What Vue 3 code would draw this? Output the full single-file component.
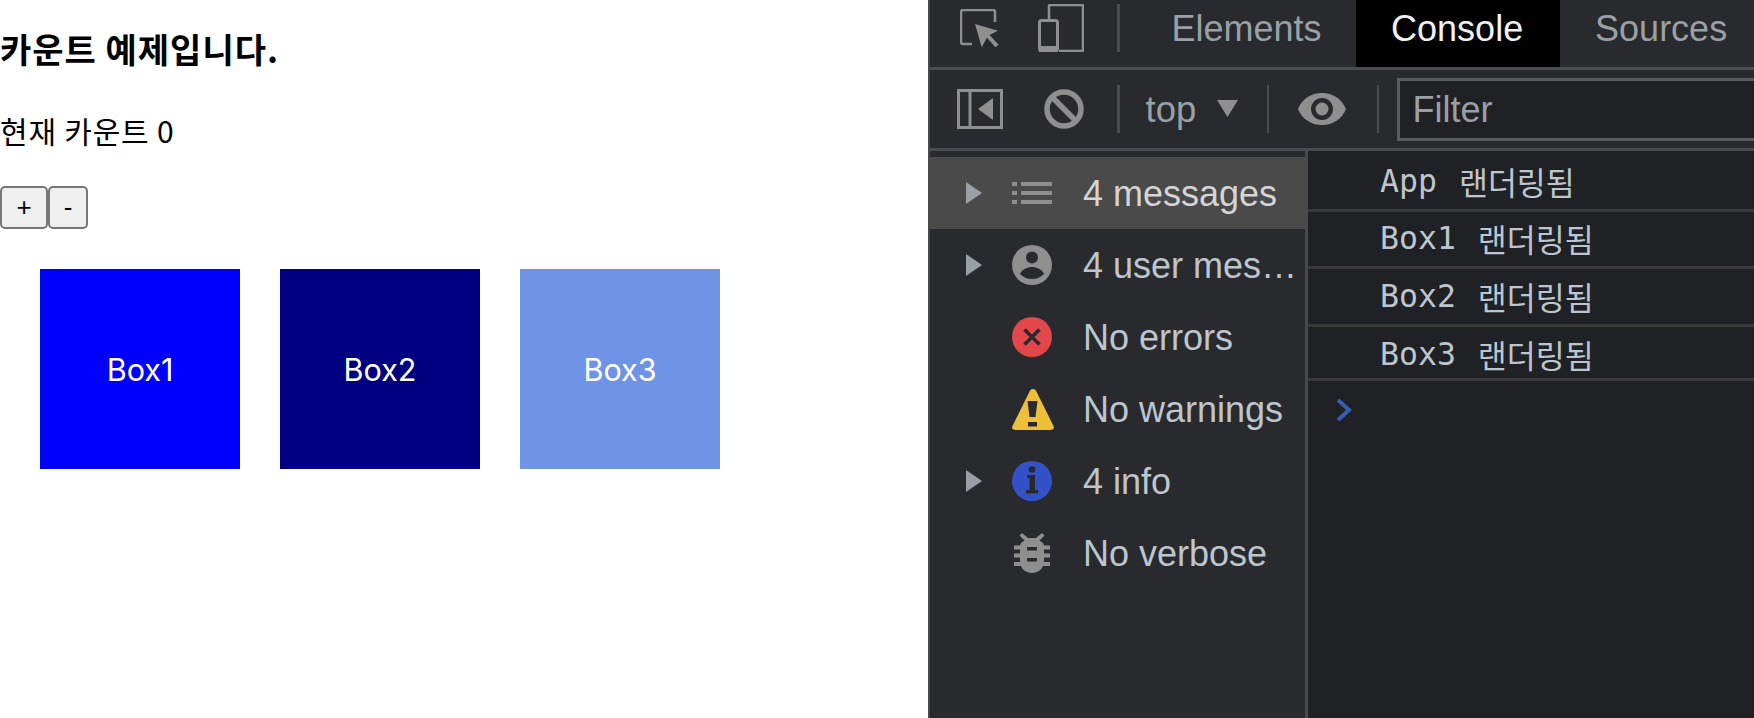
<script setup>
const tabs = [
  { label: 'Elements', cls: 'tab-elements' },
  { label: 'Console', cls: 'tab-console' },
  { label: 'Sources', cls: 'tab-sources' },
]
const boxes = [
  { label: 'Box1', color: '#0000ff' },
  { label: 'Box2', color: '#000080' },
  { label: 'Box3', color: '#6f94e6' },
]
const logs = ['App', 'Box1', 'Box2', 'Box3']
</script>

<template>
  <div class="page">
    <main class="demo">
      <h3 class="title">카운트 예제입니다.</h3>
      <p class="count">현재 카운트 0</p>
      <div class="buttons">
        <button class="btn plus">+</button>
        <button class="btn minus">-</button>
      </div>
      <div class="boxes">
        <div v-for="b in boxes" :key="b.label" class="box" :style="{ background: b.color }">{{ b.label }}</div>
      </div>
    </main>

    <section class="devtools">
      <header class="tabbar">
        <svg class="ic-inspect" width="40" height="40" viewBox="0 0 40 40" fill="none">
          <path d="M12 35H3a2 2 0 0 1-2-2V3a2 2 0 0 1 2-2h30a2 2 0 0 1 2 2v10" stroke="#8f8f8f" stroke-width="2.5"/>
          <path d="M15 15l23 6.700-10 5-6.300 11.600z" fill="#8f8f8f"/>
          <path d="M27 26l10 11" stroke="#8f8f8f" stroke-width="4"/>
        </svg>
        <svg class="ic-device" width="46" height="48" viewBox="0 0 46 48" fill="none">
          <path d="M11 15V2a1 1 0 0 1 1-1h32a1 1 0 0 1 1 1v44a1 1 0 0 1-1 1H21" stroke="#8f8f8f" stroke-width="2.5"/>
          <rect x="1.500" y="16.500" width="18" height="30" rx="2" stroke="#8f8f8f" stroke-width="3"/>
          <rect x="1" y="42" width="19" height="6" fill="#8f8f8f"/>
        </svg>
        <span class="vsep first-sep"></span>
        <span v-for="t in tabs" :key="t.label" class="tab" :class="t.cls">{{ t.label }}</span>
      </header>

      <div class="toolbar">
        <svg class="ic-panel" width="46" height="40" viewBox="0 0 46 40" fill="none">
          <rect x="1.500" y="1.500" width="43" height="37" stroke="#8f8f8f" stroke-width="3"/>
          <path d="M13 1v38" stroke="#8f8f8f" stroke-width="3"/>
          <path d="M36 9v22L21 20z" fill="#8f8f8f"/>
        </svg>
        <svg class="ic-block" width="40" height="40" viewBox="0 0 40 40" fill="none">
          <circle cx="20" cy="20" r="17" stroke="#8f8f8f" stroke-width="5.500"/>
          <path d="M8 8l24 24" stroke="#8f8f8f" stroke-width="5.500"/>
        </svg>
        <span class="vsep sep-b"></span>
        <span class="top-label">top</span>
        <svg class="ic-caret" width="21" height="17" viewBox="0 0 21 17"><path d="M0 0h21L10.500 17z" fill="#8f8f8f"/></svg>
        <span class="vsep sep-c"></span>
        <svg class="ic-eye" width="48" height="32" viewBox="0 0 48 32">
          <path fill-rule="evenodd" fill="#8f8f8f" d="M24 0c11 0 20 6 24 16-4 10-13 16-24 16S4 26 0 16C4 6 13 0 24 0zm0 5a11 11 0 1 0 0 22 11 11 0 0 0 0-22z"/>
          <circle cx="24" cy="16" r="6.500" fill="#8f8f8f"/>
        </svg>
        <span class="vsep sep-d"></span>
        <div class="filter">Filter</div>
      </div>

      <div class="panes">
        <aside class="sidebar">
          <div class="row active">
            <span class="arrow"></span>
            <svg class="ric" width="40" height="40" viewBox="0 0 40 40" fill="#8f8f8f">
              <rect x="0" y="9" width="5" height="4"/><rect x="0" y="18" width="5" height="4"/><rect x="0" y="27" width="5" height="4"/>
              <rect x="9" y="9" width="31" height="4"/><rect x="9" y="18" width="31" height="4"/><rect x="9" y="27" width="31" height="4"/>
            </svg>
            <span class="rlabel light">4 messages</span>
          </div>
          <div class="row">
            <span class="arrow"></span>
            <svg class="ric" width="40" height="40" viewBox="0 0 40 40">
              <circle cx="20" cy="20" r="20" fill="#8f8f8f"/>
              <circle cx="20" cy="12.500" r="6" fill="#292a2d"/>
              <path d="M8 29c2-5 8-7 12-7s10 2 12 7c-3 3-7 5-12 5s-9-2-12-5z" fill="#292a2d"/>
            </svg>
            <span class="rlabel">4 user mes…</span>
          </div>
          <div class="row">
            <span class="arrow none"></span>
            <svg class="ric" width="40" height="40" viewBox="0 0 40 40">
              <circle cx="20" cy="20" r="20" fill="#e2474b"/>
              <path d="M12.500 12.500l15 15M27.500 12.500l-15 15" stroke="#292a2d" stroke-width="3.500"/>
            </svg>
            <span class="rlabel">No errors</span>
          </div>
          <div class="row">
            <span class="arrow none"></span>
            <svg class="ric" width="42" height="41" viewBox="0 0 42 41">
              <path d="M21 0c1.500 0 2.500.8 3.300 2.200L41.500 37c1 2.200-.2 4-3 4H3.500c-2.800 0-4-1.800-3-4L17.700 2.200C18.500.8 19.500 0 21 0z" fill="#f0bf3a"/>
              <path d="M15.500 12h10l-2 16h-6z" fill="#292a2d"/>
              <rect x="16" y="33" width="9" height="4.500" fill="#292a2d"/>
            </svg>
            <span class="rlabel">No warnings</span>
          </div>
          <div class="row">
            <span class="arrow"></span>
            <svg class="ric" width="40" height="40" viewBox="0 0 40 40">
              <circle cx="20" cy="20" r="20" fill="#3452c8"/>
              <circle cx="20" cy="8.500" r="3.300" fill="#292a2d"/>
              <path d="M15 14h8v15h3v3.500H14V29h3.500V17H15z" fill="#292a2d"/>
            </svg>
            <span class="rlabel">4 info</span>
          </div>
          <div class="row">
            <span class="arrow none"></span>
            <svg class="ric" width="40" height="40" viewBox="0 0 40 40" fill="#8f8f8f">
              <path d="M10 0l6 5h8l6-5 2.500 2.500-5 5C30.500 9 32 11 32 13v15c0 7-5 12-12 12S8 35 8 28V13c0-2 1.500-4 4.500-5.500l-5-5z"/>
              <rect x="2" y="12.500" width="36" height="4"/><rect x="2" y="20.500" width="36" height="4"/><rect x="2" y="29" width="36" height="4"/>
              <rect x="15" y="14" width="10" height="3.500" fill="#292a2d"/><rect x="15" y="25" width="10" height="3.500" fill="#292a2d"/>
            </svg>
            <span class="rlabel">No verbose</span>
          </div>
        </aside>
        <div class="console">
          <div v-for="l in logs" :key="l" class="log">
            <span class="mono">{{ l }}</span><span class="ko">랜더링됨</span>
          </div>
          <svg class="prompt" width="16" height="24" viewBox="0 0 16 24" fill="none">
            <path d="M2 2l11 10L2 22" stroke="#3b5cb0" stroke-width="4"/>
          </svg>
        </div>
      </div>
    </section>
  </div>
</template>

<style>
html, body { margin: 0; background: #fff; }
</style>

<style scoped>
.page {
  display: flex;
  width: 1754px;
  height: 718px;
  overflow: hidden;
  font-family: "Liberation Sans", "Noto Sans CJK KR", sans-serif;
}
.demo {
  width: 928px;
  flex: none;
  background: #fff;
  color: #000;
}
.title {
  margin: 0;
  padding-top: 30px;
  font-size: 34px;
  line-height: 37px;
  font-weight: 700;
  letter-spacing: 1px;
  font-family: "Noto Sans CJK KR", sans-serif;
  white-space: nowrap;
}
.count {
  margin: 0;
  padding-top: 45px;
  font-size: 30px;
  line-height: 37px;
  font-family: "Noto Sans CJK KR", sans-serif;
  font-weight: 400;
  letter-spacing: 0.8px;
}
.buttons {
  display: flex;
  padding-top: 37px;
}
.btn {
  height: 43px;
  padding: 0;
  box-sizing: border-box;
  background: #efefef;
  border: 2px solid #767676;
  border-radius: 5px;
  font-family: "Liberation Sans", sans-serif;
  font-size: 26px;
  color: #000;
}
.plus { width: 48px; }
.minus { width: 40px; }
.boxes {
  display: flex;
  gap: 40px;
  padding: 40px 0 0 40px;
}
.box {
  width: 200px;
  height: 200px;
  display: flex;
  align-items: center;
  justify-content: center;
  color: #fff;
  font-family: "Inter", "Liberation Sans", sans-serif;
  font-size: 30.500px;
  font-weight: 400;
}
.devtools {
  flex: 1;
  display: flex;
  flex-direction: column;
  background: #292a2d;
  border-left: 2px solid #48494c;
  min-width: 0;
}
.tabbar {
  height: 67px;
  flex: none;
  display: flex;
  align-items: stretch;
  border-bottom: 3px solid #494c50;
}
.ic-inspect { align-self: flex-start; margin-left: 30px; margin-top: 9px; flex: none; }
.ic-device { align-self: flex-start; margin-left: 38px; margin-top: 4px; flex: none; }
.vsep {
  width: 2.500px;
  background: #4a4c50;
  flex: none;
}
.first-sep { margin: 4px 0 15px 33px; }
.tab {
  font-size: 36px;
  color: #9aa0a6;
  display: flex;
  align-items: center;
  padding-bottom: 10px;
  box-sizing: border-box;
  white-space: nowrap;
}
.tab-elements { margin-left: 52px; }
.tab-console {
  margin-left: 34.500px;
  width: 204px;
  padding-left: 35px;
  background: #000;
  color: #f1f1f1;
  flex: none;
}
.tab-sources { margin-left: 35px; }
.toolbar {
  height: 78px;
  flex: none;
  display: flex;
  align-items: center;
  border-bottom: 3px solid #494c50;
}
.ic-panel { margin-left: 27px; flex: none; }
.ic-block { margin-left: 41px; flex: none; }
.vsep.sep-b, .vsep.sep-c, .vsep.sep-d { height: 48px; }
.sep-b { margin-left: 33px; }
.top-label { margin-left: 26px; width: 71px; font-size: 36.500px; color: #9aa0a6; margin-top: 1px; flex: none; }
.ic-caret { margin-top: -2px; flex: none; }
.sep-c { margin-left: 29px; }
.ic-eye { margin-left: 28.500px; flex: none; }
.sep-d { margin-left: 31px; }
.filter {
  margin-left: 17.500px;
  flex: 1;
  height: 63px;
  box-sizing: border-box;
  background: #202124;
  border: 3px solid #5a5b5d;
  border-right: 0;
  font-size: 36px;
  color: #9aa0a6;
  padding-left: 13px;
  display: flex;
  align-items: center;
  margin-top: 1px;
}
.panes {
  flex: 1;
  display: flex;
  min-height: 0;
}
.sidebar {
  width: 375px;
  flex: none;
  padding-top: 6px;
  border-right: 3px solid #48494c;
  background: #292a2d;
}
.row {
  height: 72px;
  display: flex;
  align-items: center;
  position: relative;
  padding-left: 36px;
}
.row.active { background: #4a4a4a; }
.arrow {
  width: 0;
  height: 0;
  border-left: 16px solid #9aa0a6;
  border-top: 11px solid transparent;
  border-bottom: 11px solid transparent;
  flex: none;
}
.arrow.none { border-left-color: transparent; }
.ric { margin-left: 30px; flex: none; }
.rlabel {
  position: absolute;
  left: 153px;
  top: 16px;
  line-height: 41px;
  font-size: 36px;
  color: #bdc6cf;
  white-space: nowrap;
}
.rlabel.light { color: #d5d5d5; }
.console {
  flex: 1;
  background: #202124;
  min-width: 0;
}
.log {
  box-sizing: border-box;
  height: 58px;
  padding-left: 72px;
  padding-bottom: 2px;
  border-bottom: 3px solid #3a3a3a;
  display: flex;
  align-items: center;
  color: #bdc6cf;
  white-space: nowrap;
}
.log:nth-child(1) { height: 61px; padding-top: 2px; padding-bottom: 0; }
.log:nth-child(2) { height: 57px; }
.log:nth-child(4) { height: 54px; padding-top: 3px; padding-bottom: 0; }
.mono {
  font-family: "DejaVu Sans Mono", monospace;
  font-size: 31.500px;
}
.ko {
  font-family: "Noto Sans CJK KR", sans-serif;
  font-size: 31.500px;
  margin-left: 22px;
}
.prompt { margin: 17px 0 0 28px; display: block; }
</style>
